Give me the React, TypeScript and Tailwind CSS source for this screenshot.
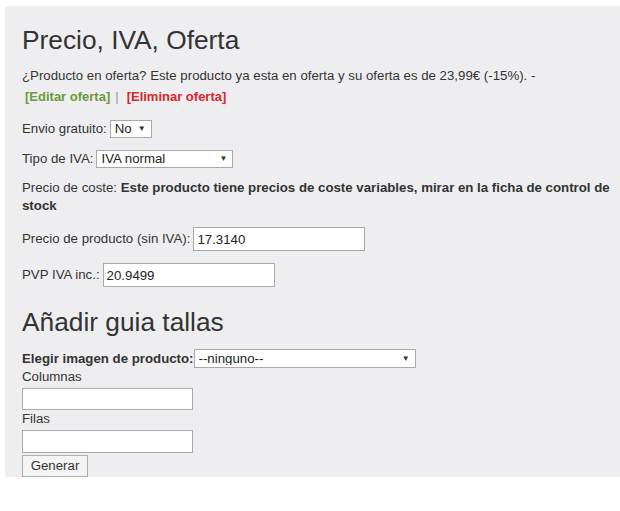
import React from 'react';

const font = { fontFamily: '"Liberation Sans", Arial, sans-serif' };

function Select({ value, width, height }: { value: string; width: string; height: string }) {
  return (
    <span className={`relative inline-block ${width} ${height}`}>
      <select
        defaultValue={value}
        className="h-full w-full appearance-none rounded-none border border-[#a9a9a9] bg-white pl-[4px] text-[13.25px] leading-none text-[#222] outline-none"
      >
        <option>{value}</option>
      </select>
      <span className="pointer-events-none absolute right-[6px] top-1/2 -translate-y-1/2 text-[8px] text-[#333]">▼</span>
    </span>
  );
}

function TextInput({ value, width, height }: { value?: string; width: string; height: string }) {
  return (
    <input
      type="text"
      defaultValue={value}
      className={`${width} ${height} border border-[#a9a9a9] bg-white px-[3px] text-[13.25px] text-[#222] outline-none`}
    />
  );
}

export default function App() {
  return (
    <div className="h-[511px] w-[620px] bg-white" style={font}>
      <div className="ml-[5px] mt-[6px] bg-[#eeeef0] pl-[17px] pr-[5px] pt-[20px] text-[13.25px] leading-[18px] text-[#333]">
        <h2 className="text-[26.3px] font-normal leading-[29px]">Precio, IVA, Oferta</h2>

        <p className="mt-[12px]">¿Producto en oferta? Este producto ya esta en oferta y su oferta es de 23,99€ (-15%). -</p>
        <div className="mt-[3px] pl-[3px] text-[13px] font-bold">
          <a className="text-[#6b9a3a]">[Editar oferta]</a>
          <span className="ml-[5px] mr-[8px] font-normal text-[#999]">|</span>
          <a className="text-[#d8262b]">[Eliminar oferta]</a>
        </div>

        <div className="mt-[14px] flex items-center gap-[3px]">
          <span>Envio gratuito:</span>
          <Select value="No" width="w-[42px]" height="h-[18px]" />
        </div>

        <div className="mt-[12px] flex items-center gap-[3px]">
          <span>Tipo de IVA:</span>
          <Select value="IVA normal" width="w-[137px]" height="h-[18px]" />
        </div>

        <p className="mt-[11px]">
          Precio de coste: <b>Este producto tiene precios de coste variables, mirar en la ficha de control de stock</b>
        </p>

        <div className="mt-[12px] flex items-center gap-[3px]">
          <span>Precio de producto (sin IVA):</span>
          <TextInput value="17.3140" width="w-[172px]" height="h-[24px]" />
        </div>

        <div className="mt-[12px] flex items-center gap-[3px]">
          <span>PVP IVA inc.:</span>
          <TextInput value="20.9499" width="w-[172px]" height="h-[24px]" />
        </div>

        <h2 className="mt-[21px] text-[26.3px] font-normal leading-[29px]">Añadir guia tallas</h2>

        <div className="mt-[12px] flex items-center">
          <b>Elegir imagen de producto:</b>
          <Select value="--ninguno--" width="w-[222px]" height="h-[19px]" />
        </div>

        <div>Columnas</div>
        <div className="mt-[2px] flex">
          <TextInput width="w-[171px]" height="h-[22px]" />
        </div>
        <div>Filas</div>
        <div className="mt-[2px] flex">
          <TextInput width="w-[171px]" height="h-[23px]" />
        </div>
        <div className="mt-[2px] flex">
          <button
            type="button"
            className="h-[22px] w-[66px] border border-[#adadad] bg-[#f4f4f4] text-[13.25px] text-[#333]"
          >
            Generar
          </button>
        </div>
      </div>
    </div>
  );
}
